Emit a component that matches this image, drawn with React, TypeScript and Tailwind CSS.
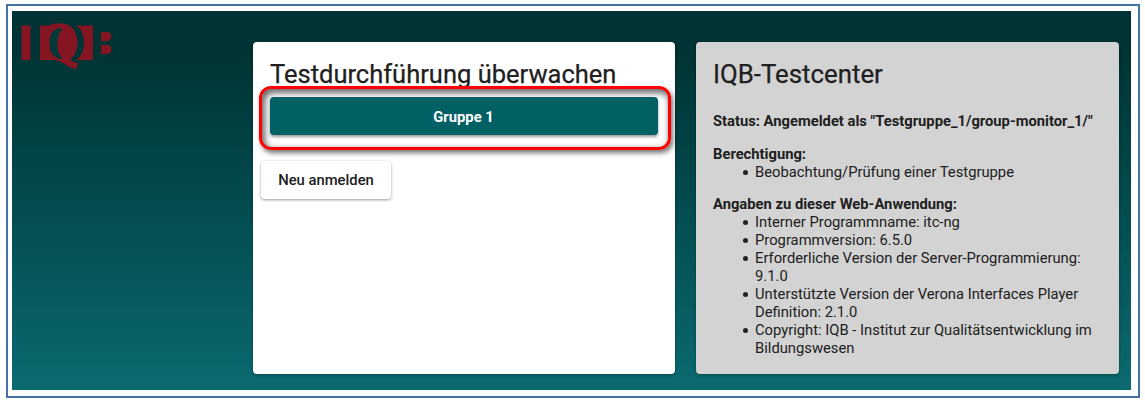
import type { ReactNode } from "react";

function Logo() {
  return (
    <svg
      className="block h-[48px] w-[92px] shrink-0"
      viewBox="0 0 92 48"
      fill="#861524"
      aria-label="IQB"
    >
      <path d="M1.500 3.500H10.500V38H1.500Z" />
      <path d="M20 3.500H29.500C33 1 43 0 50 4C60 11 60 30 50.500 37C52 39.500 55 41 58.500 41L56 47.500C49 45.500 43 40 35 38H20Z" />
      <path d="M56.500 3.500H73V38H56.500C66.500 31 66.500 11 56.500 3.500Z" />
      <path d="M81 10H88C92.500 10 92.500 19 88 19H81ZM81 23H88C92.500 23 92.500 32 88 32H81Z" />
      <path fill="#003938" d="M42.500 7C34.500 5 29.500 11 29.500 20.500C29.500 30 33 36.500 42.500 37C35.500 29 35.500 14 42.500 7Z" />
    </svg>
  );
}

function Card({ className, children }: { className: string; children: ReactNode }) {
  return (
    <section
      className={`h-[332.500px] w-[422.500px] shrink-0 rounded-[4px] shadow-[0_1px_3px_rgba(0,0,0,0.35)] ${className}`}
    >
      {children}
    </section>
  );
}

function Item({ children }: { children: ReactNode }) {
  return (
    <li className="flex">
      <span className="mt-[7px] mr-[7px] size-[5px] shrink-0 rounded-full bg-[#202020]" />
      <span>{children}</span>
    </li>
  );
}

export default function App() {
  return (
    <div className="h-[404px] w-[1145px] overflow-hidden bg-white pt-1 pl-1.5 font-['Roboto',sans-serif] text-[#202020]">
      <div className="h-[394px] w-[1134px] border-2 border-[#4472a4] pt-[5px] pl-1">
        <main className="flex h-[379px] w-[1119px] bg-linear-to-b from-[#003333] from-10% to-[#0b6a70]">
          <div className="w-[240.500px] shrink-0 pt-[11px] pl-[8px]">
            <Logo />
          </div>
          <div className="flex gap-[21px] pt-[30.500px]">
            <Card className="bg-white">
              <h1 className="ml-[17.500px] pt-[16px] text-[25.500px] leading-[32px] whitespace-nowrap [-webkit-text-stroke:0.25px_#202020]">
                Testdurchführung überwachen
              </h1>
              <div className="relative mt-[7.500px] ml-[17px] w-[388px]">
                <div className="pointer-events-none absolute -top-[11px] -left-[11px] h-[64px] w-[412px] rounded-[12px] border-3 border-[#ff0000] shadow-[2px_3px_5px_rgba(0,0,0,0.55)]">
                  <div className="h-full w-full rounded-[9px] shadow-[inset_2px_3px_6px_1px_rgba(0,0,0,0.6)]" />
                </div>
                <button className="relative block h-[38px] w-full rounded-[4px] bg-[#006064] pt-[2px] text-[14.800px] font-bold text-white shadow-[0_2px_3px_rgba(0,0,0,0.4)]">
                  Gruppe 1
                </button>
              </div>
              <button className="mt-[25.500px] ml-[8.500px] block h-[38px] w-[130px] rounded-[4px] bg-white pt-px text-[14.800px] font-medium shadow-[0_1px_3px_rgba(0,0,0,0.4)]">
                Neu anmelden
              </button>
            </Card>
            <Card className="bg-[#d3d3d3] px-[17px] text-[14.780px] leading-[18px]">
              <h1 className="pt-[16px] text-[25.800px] leading-[32px] [-webkit-text-stroke:0.25px_#202020]">
                IQB-Testcenter
              </h1>
              <p className="mt-[22px] text-[14.750px] font-bold whitespace-nowrap">
                Status: Angemeldet als "Testgruppe_1/group-monitor_1/"
              </p>
              <h2 className="mt-[15px] text-[14.750px] font-bold">Berechtigung:</h2>
              <ul className="pl-[30px]">
                <Item>Beobachtung/Prüfung einer Testgruppe</Item>
              </ul>
              <h2 className="mt-[14.500px] text-[14.750px] font-bold">
                Angaben zu dieser Web-Anwendung:
              </h2>
              <ul className="pl-[30px] whitespace-nowrap">
                <Item>Interner Programmname: itc-ng</Item>
                <Item>Programmversion: 6.5.0</Item>
                <Item>
                  Erforderliche Version der Server-Programmierung:
                  <br />
                  9.1.0
                </Item>
                <Item>
                  Unterstützte Version der Verona Interfaces Player
                  <br />
                  Definition: 2.1.0
                </Item>
                <Item>
                  Copyright: IQB - Institut zur Qualitätsentwicklung im
                  <br />
                  Bildungswesen
                </Item>
              </ul>
            </Card>
          </div>
        </main>
      </div>
    </div>
  );
}
